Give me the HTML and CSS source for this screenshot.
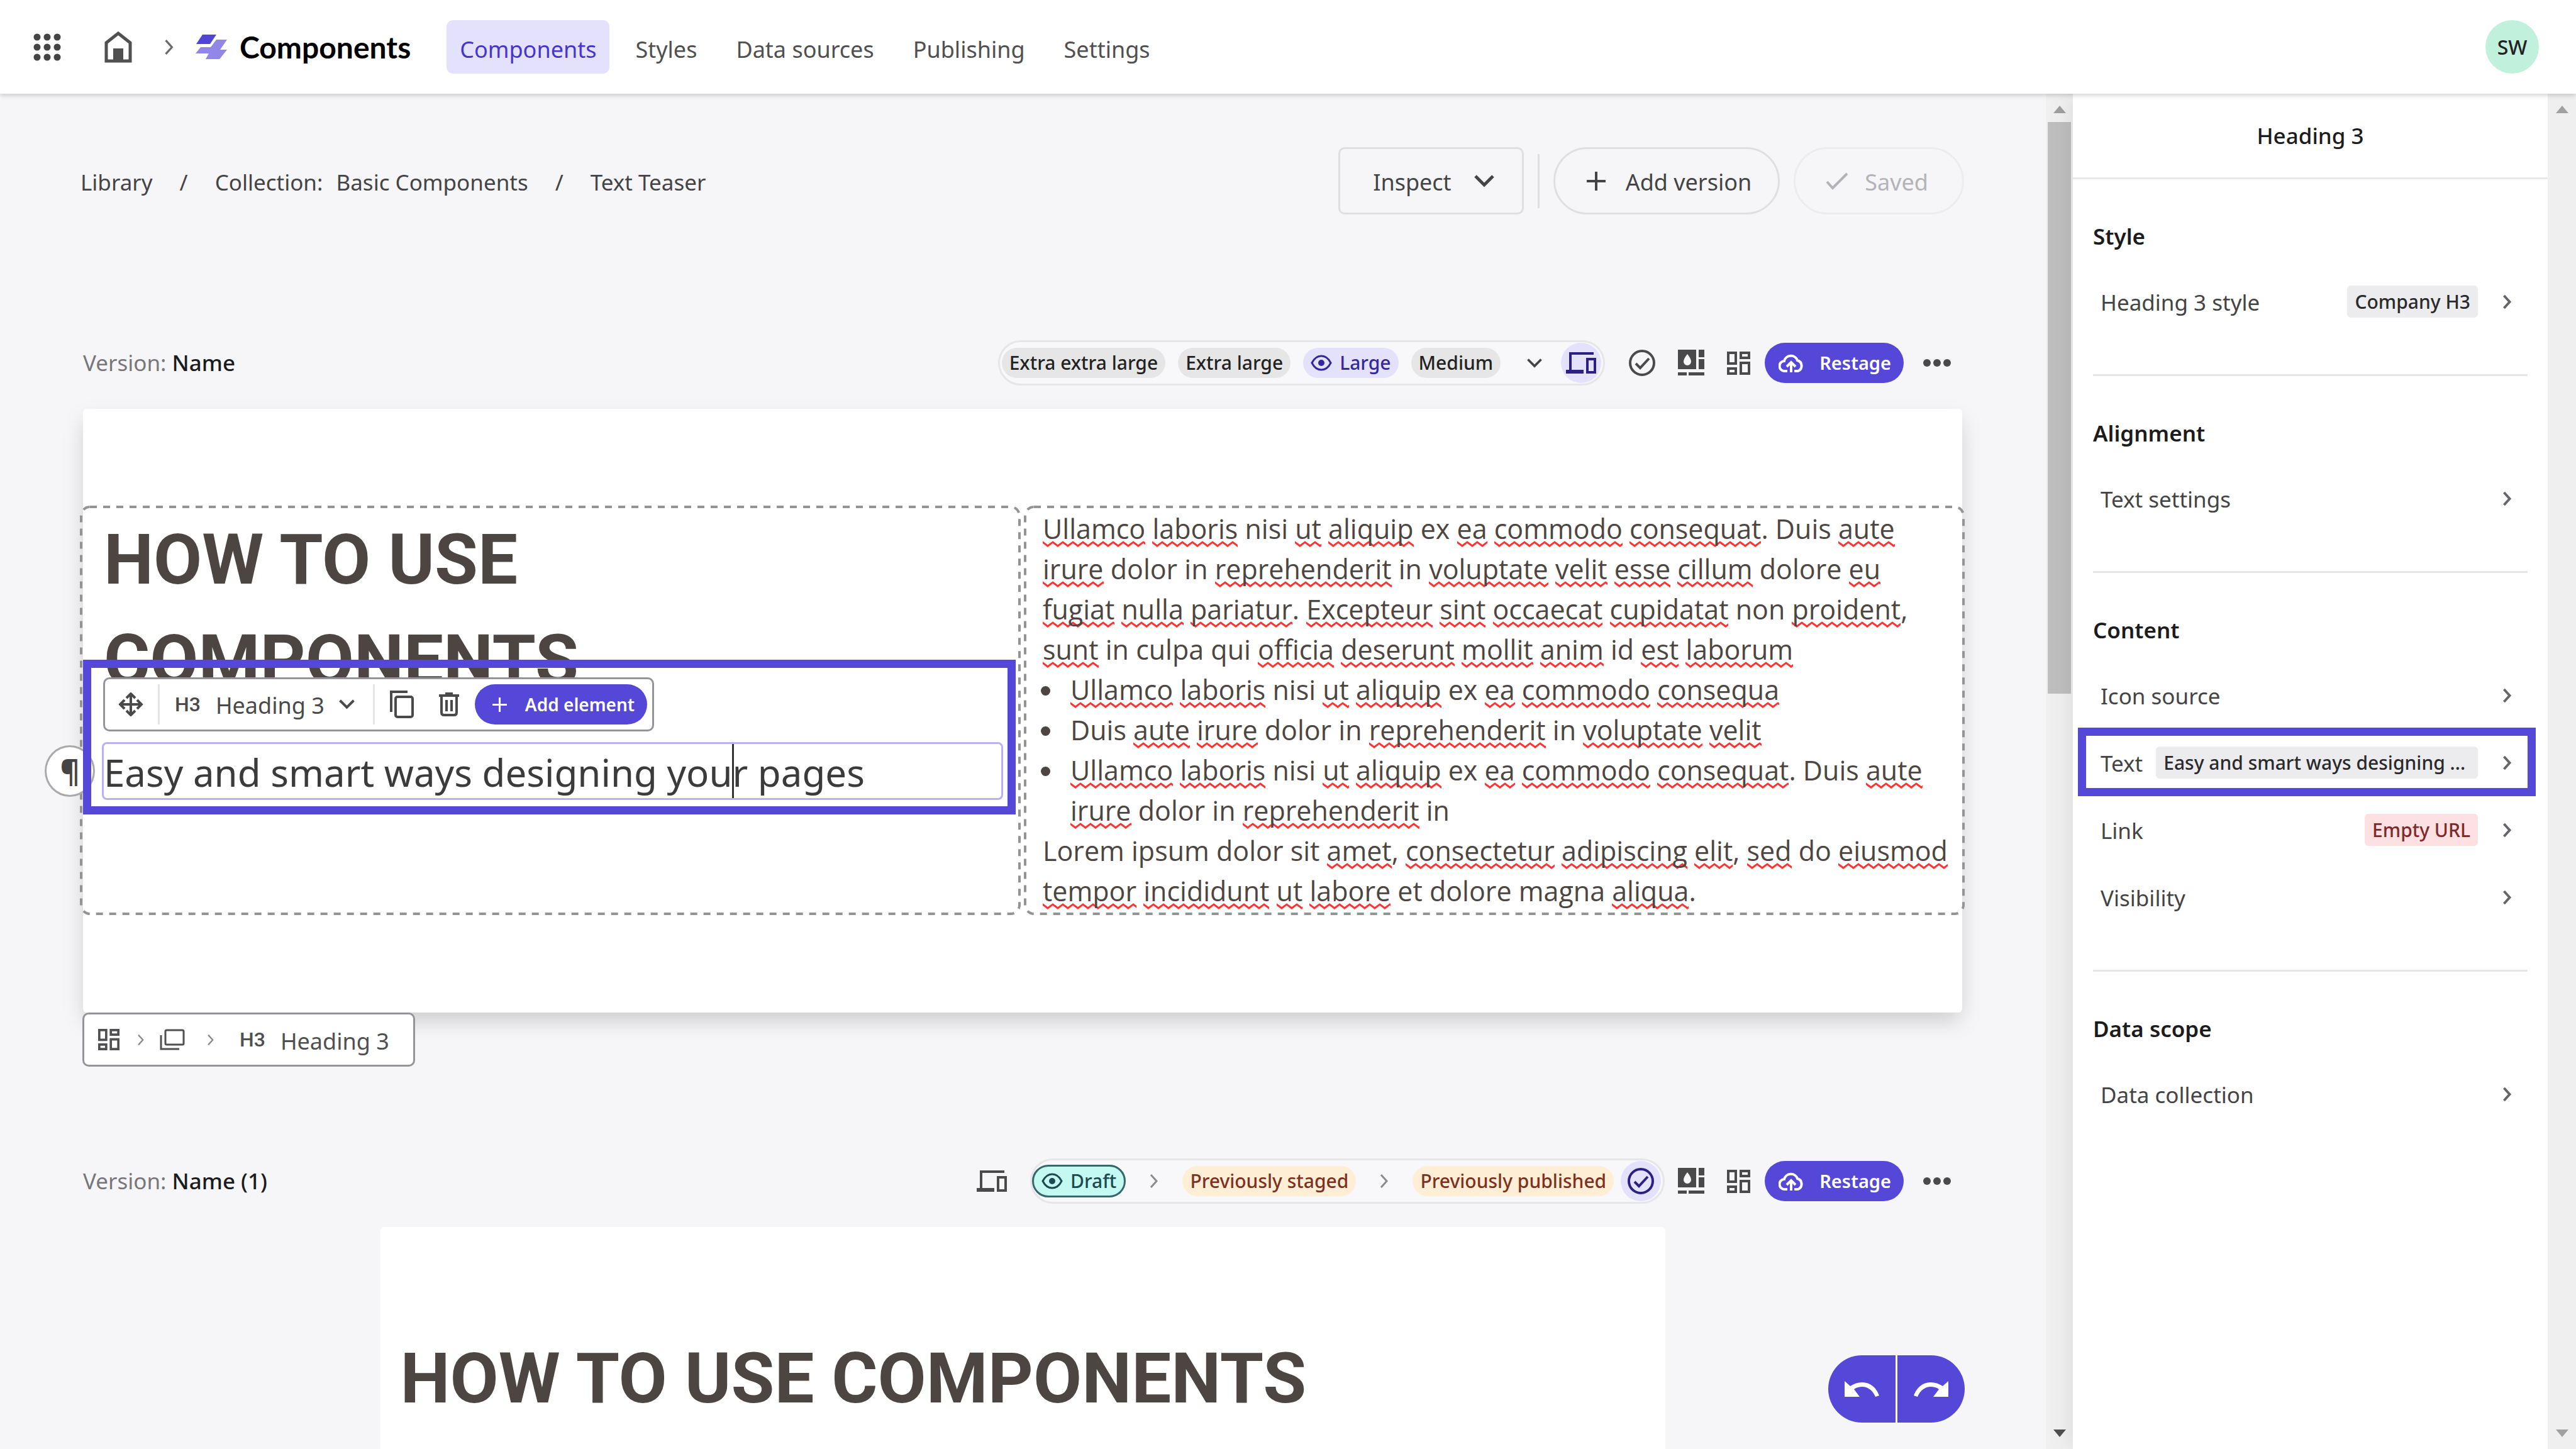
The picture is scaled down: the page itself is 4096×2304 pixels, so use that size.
FILE: index.html
```html
<!DOCTYPE html>
<html lang="en">
<head>
<meta charset="utf-8">
<title>Components – Text Teaser</title>
<link rel="stylesheet" href="styles.css">
</head>
<body>
<svg class="defs" aria-hidden="true">
  <symbol id="i-chev-r" viewBox="0 0 14 24"><path d="M2 2l9 10-9 10" fill="none" stroke="currentColor"/></symbol>
  <symbol id="i-chev-d" viewBox="0 0 32 20"><path d="M2 2l14 14L30 2" fill="none" stroke="currentColor" stroke-width="5"/></symbol>
  <symbol id="i-plus" viewBox="0 0 30 30"><path d="M15 0v30M0 15h30" stroke="currentColor" stroke-width="4"/></symbol>
  <symbol id="i-check" viewBox="0 0 36 28"><path d="M2 15l9 10L34 2" fill="none" stroke="currentColor" stroke-width="4"/></symbol>
  <symbol id="i-eye" viewBox="0 0 34 26"><path d="M2 13C6 5 11 2 17 2s11 3 15 11c-4 8-9 11-15 11S6 21 2 13z" fill="none" stroke="currentColor" stroke-width="3"/><circle cx="17" cy="13" r="5" fill="currentColor"/></symbol>
  <symbol id="i-device" viewBox="0 0 48 34"><path d="M44 2H7v27" fill="none" stroke="currentColor" stroke-width="4"/><path d="M0 28h28v6H0z" fill="currentColor"/><path d="M34 11h12v21H34z" fill="none" stroke="currentColor" stroke-width="4"/></symbol>
  <symbol id="i-circle" viewBox="0 0 42 42"><circle cx="21" cy="21" r="19" fill="none" stroke="currentColor" stroke-width="4"/><path d="M11 22l7 7 14-15" fill="none" stroke="currentColor" stroke-width="4"/></symbol>
  <symbol id="i-style" viewBox="0 0 42 42"><path fill="currentColor" fill-rule="evenodd" d="M0 0h29v31H0zM15 7c-4 5-6 9-6 12a6 6 0 0 0 12 0c0-3-2-7-6-12zM33 0h9v12h-9zM33 15h9v16h-9zM0 36h14v5H0zM17 36h25v5H17z"/></symbol>
  <symbol id="i-grid" viewBox="0 0 37 37"><path d="M2 2h12v17H2zM22 2h13v8H22zM22 18h13v17H22zM2 27h12v8H2z" fill="none" stroke="currentColor" stroke-width="4"/></symbol>
  <symbol id="i-cloud" viewBox="0 0 40 30"><path d="M14 28H10A8 8 0 0 1 9 12a11 11 0 0 1 21-1 9 9 0 0 1 1 17H25" fill="none" stroke="currentColor" stroke-width="4"/><path d="M20 30V15M13 21l7-7 7 7" fill="none" stroke="currentColor" stroke-width="4"/></symbol>
  <symbol id="i-dots" viewBox="0 0 44 12"><g fill="currentColor"><circle cx="6" cy="6" r="6"/><circle cx="22" cy="6" r="6"/><circle cx="38" cy="6" r="6"/></g></symbol>
  <symbol id="i-undo" viewBox="0 0 55 25"><path fill="currentColor" d="M0 0l9 8C15 4 21 2 28 2c13 0 23 9 27 21l-6 2C45 15 37 9 28 9c-5 0-9 1-13 4l9 12H0z"/></symbol>
  <symbol id="i-up" viewBox="0 0 20 12"><path fill="currentColor" d="M10 0l10 12H0z"/></symbol>
  <symbol id="i-down" viewBox="0 0 20 12"><path fill="currentColor" d="M0 0h20L10 12z"/></symbol>
</svg>

<header class="topbar">
  <button class="bare" aria-label="Apps"><svg width="44" height="44" viewBox="0 0 44 44"><g fill="#444"><circle cx="6" cy="6" r="5.500"/><circle cx="22" cy="6" r="5.500"/><circle cx="38" cy="6" r="5.500"/><circle cx="6" cy="22" r="5.500"/><circle cx="22" cy="22" r="5.500"/><circle cx="38" cy="22" r="5.500"/><circle cx="6" cy="38" r="5.500"/><circle cx="22" cy="38" r="5.500"/><circle cx="38" cy="38" r="5.500"/></g></svg></button>
  <a class="home" href="#" aria-label="Home"><svg width="44" height="50" viewBox="0 0 44 50"><path d="M3 18L22 3l19 15v29H3z" fill="none" stroke="#505050" stroke-width="5"/><path d="M14 27h16v20H14z" fill="#505050"/></svg></a>
  <svg class="sep" width="16" height="26"><use href="#i-chev-r"/></svg>
  <a class="brand" href="#"><svg width="50" height="39" viewBox="0 0 50 39"><path fill="#9287e6" d="M33 8h17L39 24h11L38 39H16l5-9H0l8-10h16z"/><path fill="#5244d6" d="M11 0h22L23 15H1z"/></svg><span>Components</span></a>
  <nav class="nav">
    <a class="active" href="#">Components</a>
    <a href="#">Styles</a>
    <a href="#">Data sources</a>
    <a href="#">Publishing</a>
    <a href="#">Settings</a>
  </nav>
  <button class="avatar">SW</button>
</header>

<div class="body">
  <main class="work">
    <div class="crumbrow">
      <nav class="crumbs"><a href="#">Library</a><span>/</span><a href="#">Collection: <b>Basic Components</b></a><span>/</span><a href="#">Text Teaser</a></nav>
      <div class="actions">
        <button class="btn square"><span>Inspect</span><svg width="32" height="20"><use href="#i-chev-d"/></svg></button>
        <i class="vline"></i>
        <button class="btn"><svg width="30" height="30"><use href="#i-plus"/></svg><span>Add version</span></button>
        <button class="btn saved" disabled><svg width="36" height="28"><use href="#i-check"/></svg><span>Saved</span></button>
      </div>
    </div>

    <section class="version first">
      <div class="bar">
        <h2>Version: <b>Name</b></h2>
        <div class="tools">
          <div class="group">
            <button class="chip">Extra extra large</button>
            <button class="chip">Extra large</button>
            <button class="chip on"><svg width="34" height="26"><use href="#i-eye"/></svg>Large</button>
            <button class="chip">Medium</button>
            <button class="more" aria-label="More sizes"><svg width="24" height="15"><use href="#i-chev-d"/></svg></button>
            <button class="bubble" aria-label="Devices"><svg width="48" height="34"><use href="#i-device"/></svg></button>
          </div>
          <button class="bare gap38" aria-label="Status"><svg width="42" height="42"><use href="#i-circle"/></svg></button>
          <button class="bare gap36" aria-label="Style"><svg width="42" height="42"><use href="#i-style"/></svg></button>
          <button class="bare gap36" aria-label="Layout"><svg width="37" height="37"><use href="#i-grid"/></svg></button>
          <button class="restage"><svg width="40" height="30"><use href="#i-cloud"/></svg>Restage</button>
          <button class="bare dots" aria-label="More"><svg width="44" height="12"><use href="#i-dots"/></svg></button>
        </div>
      </div>
      <div class="card">
        <div class="cols">
          <div class="col">
            <svg class="dash"><rect x="2" y="2" rx="14"/></svg>
            <h1>HOW TO USE COMPONENTS</h1>
            <button class="para" aria-label="Paragraph">¶</button>
            <div class="edit" contenteditable="true" spellcheck="false">Easy and smart ways designing you<span class="caret"></span>r pages</div>
            <div class="focus"></div>
            <div class="float">
              <button class="bare" aria-label="Move"><svg width="38" height="38" viewBox="0 0 38 38"><path d="M19 3v32M3 19h32" stroke="currentColor" stroke-width="4"/><path d="M12 9l7-7 7 7M12 29l7 7 7-7M9 12l-7 7 7 7M29 12l7 7-7 7" fill="none" stroke="currentColor" stroke-width="4"/></svg></button>
              <i></i>
              <button class="bare type"><em>H3</em><span>Heading 3</span><svg width="25" height="16"><use href="#i-chev-d"/></svg></button>
              <i></i>
              <button class="bare" aria-label="Copy"><svg width="38" height="44" viewBox="0 0 38 44"><path d="M28 2H2v32" fill="none" stroke="currentColor" stroke-width="4"/><rect x="9" y="10" width="27" height="32" rx="3" fill="none" stroke="currentColor" stroke-width="4"/></svg></button>
              <button class="bare trash" aria-label="Delete"><svg width="32" height="38" viewBox="0 0 32 38"><path d="M0 5h32M10 2h12" stroke="currentColor" stroke-width="4"/><path d="M4 6v26q0 4 4 4h16q4 0 4-4V6M12 12v18M20 12v18" fill="none" stroke="currentColor" stroke-width="4"/></svg></button>
              <button class="add"><svg width="23" height="23"><use href="#i-plus"/></svg>Add element</button>
            </div>
          </div>
          <div class="col copy">
            <svg class="dash"><rect x="2" y="2" rx="14"/></svg>
            <p><u>Ullamco</u> <u>laboris</u> nisi <u>ut</u> <u>aliquip</u> ex <u>ea</u> <u>commodo</u> <u>consequat</u>. Duis <u>aute</u> <u>irure</u> dolor in <u>reprehenderit</u> in <u>voluptate</u> <u>velit</u> <u>esse</u> <u>cillum</u> dolore <u>eu</u> <u>fugiat</u> <u>nulla</u> <u>pariatur</u>. <u>Excepteur</u> <u>sint</u> <u>occaecat</u> <u>cupidatat</u> non <u>proident</u>, <u>sunt</u> in culpa qui <u>officia</u> <u>deserunt</u> <u>mollit</u> <u>anim</u> id <u>est</u> <u>laborum</u></p>
            <ul>
              <li><u>Ullamco</u> <u>laboris</u> nisi <u>ut</u> <u>aliquip</u> ex <u>ea</u> <u>commodo</u> <u>consequa</u></li>
              <li>Duis <u>aute</u> <u>irure</u> dolor in <u>reprehenderit</u> in <u>voluptate</u> <u>velit</u></li>
              <li><u>Ullamco</u> <u>laboris</u> nisi <u>ut</u> <u>aliquip</u> ex <u>ea</u> <u>commodo</u> <u>consequat</u>. Duis <u>aute</u> <u>irure</u> dolor in <u>reprehenderit</u> in</li>
            </ul>
            <p>Lorem ipsum dolor sit <u>amet</u>, <u>consectetur</u> <u>adipiscing</u> <u>elit</u>, <u>sed</u> do <u>eiusmod</u> <u>tempor</u> <u>incididunt</u> <u>ut</u> <u>labore</u> et dolore magna <u>aliqua</u>.</p>
          </div>
        </div>
        <nav class="path" aria-label="Element path">
          <svg width="34" height="34"><use href="#i-grid"/></svg>
          <svg class="sep" width="12" height="19"><use href="#i-chev-r"/></svg>
          <svg width="40" height="34" viewBox="0 0 40 34"><rect x="9" y="2" width="29" height="23" rx="2" fill="none" stroke="currentColor" stroke-width="3"/><path d="M2 10v22h29" fill="none" stroke="currentColor" stroke-width="3"/></svg>
          <svg class="sep wide" width="12" height="19"><use href="#i-chev-r"/></svg>
          <em>H3</em><span>Heading 3</span>
        </nav>
      </div>
    </section>

    <section class="version">
      <div class="bar">
        <h2>Version: <b>Name (1)</b></h2>
        <div class="tools">
          <button class="bare" aria-label="Devices"><svg width="48" height="34"><use href="#i-device"/></svg></button>
          <div class="group states">
            <button class="chip draft"><svg width="34" height="26"><use href="#i-eye"/></svg>Draft</button>
            <svg class="sep" width="14" height="24"><use href="#i-chev-r"/></svg>
            <button class="chip warn">Previously staged</button>
            <svg class="sep" width="14" height="24"><use href="#i-chev-r"/></svg>
            <button class="chip warn">Previously published</button>
            <button class="bubble" aria-label="Status"><svg width="42" height="42"><use href="#i-circle"/></svg></button>
          </div>
          <button class="bare gap20" aria-label="Style"><svg width="42" height="42"><use href="#i-style"/></svg></button>
          <button class="bare gap36" aria-label="Layout"><svg width="37" height="37"><use href="#i-grid"/></svg></button>
          <button class="restage"><svg width="40" height="30"><use href="#i-cloud"/></svg>Restage</button>
          <button class="bare dots" aria-label="More"><svg width="44" height="12"><use href="#i-dots"/></svg></button>
        </div>
      </div>
      <div class="card narrow"><h1>HOW TO USE COMPONENTS</h1></div>
    </section>

    <div class="history">
      <button aria-label="Undo"><svg width="55" height="25"><use href="#i-undo"/></svg></button>
      <button class="redo" aria-label="Redo"><svg width="55" height="25"><use href="#i-undo"/></svg></button>
    </div>
  </main>

  <div class="scroll">
    <svg width="20" height="12"><use href="#i-up"/></svg>
    <div class="rail"><div class="thumb"></div></div>
    <svg class="dark" width="20" height="12"><use href="#i-down"/></svg>
  </div>

  <aside class="panel">
    <h2>Heading 3</h2>
    <section>
      <h3>Style</h3>
      <a class="row" href="#"><span>Heading 3 style</span><b class="tag">Company H3</b><svg width="15" height="24"><use href="#i-chev-r"/></svg></a>
    </section>
    <section>
      <h3>Alignment</h3>
      <a class="row" href="#"><span>Text settings</span><svg width="15" height="24"><use href="#i-chev-r"/></svg></a>
    </section>
    <section>
      <h3>Content</h3>
      <a class="row" href="#"><span>Icon source</span><svg width="15" height="24"><use href="#i-chev-r"/></svg></a>
      <a class="row marked" href="#"><span>Text</span><b class="tag fill">Easy and smart ways designing ...</b><svg width="15" height="24"><use href="#i-chev-r"/></svg></a>
      <a class="row" href="#"><span>Link</span><b class="tag error">Empty URL</b><svg width="15" height="24"><use href="#i-chev-r"/></svg></a>
      <a class="row" href="#"><span>Visibility</span><svg width="15" height="24"><use href="#i-chev-r"/></svg></a>
    </section>
    <section>
      <h3>Data scope</h3>
      <a class="row" href="#"><span>Data collection</span><svg width="15" height="24"><use href="#i-chev-r"/></svg></a>
    </section>
  </aside>

  <div class="scroll outer">
    <svg width="20" height="12"><use href="#i-up"/></svg>
    <div class="rail"></div>
    <svg width="20" height="12"><use href="#i-down"/></svg>
  </div>
</div>
</body>
</html>
```
FILE: styles.css
```css
:root {
  --accent: #5547d7;
  --lilac: #e4e1fd;
  --ink: #444446;
  --page: #f6f6f9;
}
*, *::before, *::after { box-sizing: border-box; }
body {
  margin: 0;
  height: 100vh;
  display: flex;
  flex-direction: column;
  overflow: hidden;
  background: var(--page);
  color: var(--ink);
  font: 36px/48px "Noto Sans", "Open Sans", sans-serif;
}
a { color: inherit; text-decoration: none; }
button {
  font: inherit;
  color: inherit;
  margin: 0;
  padding: 0;
  border: 0;
  background: none;
  display: flex;
  align-items: center;
  flex: none;
  white-space: nowrap;
}
svg { display: block; flex: none; }
h1, h2, h3, p, ul { margin: 0; padding: 0; }
em { font: 500 32px/48px Roboto, sans-serif; }
.defs { position: absolute; width: 0; height: 0; }
.sep { color: #8b8b8f; stroke-width: 3px; }

/* top bar */
.topbar {
  position: relative;
  z-index: 3;
  display: flex;
  align-items: center;
  flex: none;
  height: 149px;
  padding: 0 59px 0 53px;
  background: #fff;
  box-shadow: 0 2px 8px rgba(0, 0, 0, .2);
}
.home { margin: 0 51px 0 69px; }
.topbar .sep { color: #6b6b6b; }
.brand { display: flex; align-items: center; gap: 20px; margin-left: 34px; color: #000; font: 700 48px/60px Lato, sans-serif; }
.nav { display: flex; gap: 20px; margin-left: 57px; color: #505052; }
.nav a { padding: 23px 21px 14px; border-radius: 10px; }
.nav .active { background: var(--lilac); color: #4636cc; }
.avatar {
  justify-content: center;
  width: 85px;
  height: 85px;
  margin-left: auto;
  border-radius: 50%;
  background: #c1f0dc;
  color: #222;
  font-size: 32px;
  font-weight: 500;
}

/* frame */
.body { display: flex; flex: 1; min-height: 0; }
.work { position: relative; flex: 1; min-width: 0; overflow: hidden; padding: 85px 133px 0 132px; }
.crumbrow { display: flex; align-items: center; justify-content: space-between; margin: 0 -3px 0 -4px; }
.crumbs { display: flex; gap: 43px; padding-top: 4px; font-size: 35px; }
.crumbs b { font-weight: 400; margin-left: 12px; }
.actions { display: flex; align-items: center; gap: 22px; }
.btn { height: 107px; padding: 0 42px 0 50px; gap: 32px; border: 3px solid #dfdfe2; border-radius: 54px; }
.btn span { padding-top: 5px; }
.square { padding: 0 44px 0 52px; gap: 36px; border-radius: 10px; }
.saved { color: #b4b4b8; border-color: #ececef; padding: 0 54px 0 48px; gap: 26px; }
.vline { width: 3px; height: 86px; background: #dfdfe2; }

/* version header */
.version { margin-top: 232px; }
.first { margin-top: 200px; }
.bar { display: flex; align-items: center; justify-content: space-between; height: 72px; margin-bottom: 37px; }
.bar h2 { font-size: 35px; font-weight: 400; color: #77777b; }
.bar h2 b { font-weight: 500; color: #1c1c1e; }
.tools { display: flex; align-items: center; padding-right: 18px; }
.group { display: flex; align-items: center; height: 72px; padding: 0 3px; border: 3px solid #e6e6e9; border-radius: 36px; background: #f8f8fa; }
.group .chip + .chip { margin-left: 20px; }
.chip { height: 48px; gap: 12px; padding: 0 12px; border-radius: 24px; background: #e6e6e7; color: #222; font-size: 30px; font-weight: 500; }
.chip.on { background: var(--lilac); color: #35289c; }
.more { margin: 0 30px 0 42px; }
.bubble { justify-content: center; width: 64px; height: 64px; border-radius: 50%; background: var(--lilac); color: #2c2084; }
.bare { color: #4a4a4a; }
.gap20 { margin-left: 21px; }
.gap36 { margin-left: 36px; }
.gap38 { margin-left: 38px; }
.restage { height: 64px; margin-left: 23px; padding: 0 20px 0 22px; gap: 25px; border-radius: 32px; background: var(--accent); color: #fff; font-size: 29px; font-weight: 600; }
.dots { margin-left: 31px; }
.states { margin-left: 37px; padding: 0 3px 0 0; }
.states .sep { margin: 0 38px; }
.draft { height: 52px; border: 3px solid #34696b; border-radius: 26px; background: #c4f9f1; color: #1d4a4e; }
.warn { background: #feeed6; color: #7c321f; }
.states .bubble { margin-left: 11px; }

/* preview cards */
.card { position: relative; padding: 154px 0 155px; background: #fff; border-radius: 6px; box-shadow: 0 16px 36px -4px rgba(0, 0, 0, .18); color: #4d4541; }
h1 { font: 700 112px/160px Roboto, sans-serif; }
.narrow { width: 2043px; max-width: 100%; margin: 0 auto; padding: 161px 32px 160px; box-shadow: none; }
.cols { display: grid; grid-template-columns: 1fr 1fr; gap: 5px; margin: 0 -4px 0 -5px; }
.col { position: relative; padding: 6px 28px 4px 35px; }
.col h1 { width: 900px; padding-left: 3px; }
.dash { position: absolute; inset: 0; width: 100%; height: 100%; pointer-events: none; }
.dash rect { width: calc(100% - 4px); height: calc(100% - 4px); fill: none; stroke: #949494; stroke-width: 4px; stroke-dasharray: 11 10; }
.edit { position: relative; height: 92px; margin-top: 50px; border: 3px solid #b9b1f6; border-radius: 8px; color: #3b3b3b; font-size: 60px; line-height: 90px; white-space: nowrap; }
.caret { position: absolute; top: 0; width: 3px; height: 86px; background: #333; }
.focus { position: absolute; left: 5px; right: 8px; top: 245px; height: 246px; border: 13px solid var(--accent); pointer-events: none; }
.float { position: absolute; left: 37px; top: 273px; display: flex; align-items: center; height: 86px; padding: 0 8px 0 22px; border: 3px solid #94949a; border-radius: 10px; background: #fff; }
.float i { width: 3px; height: 64px; background: #e4e4e6; margin: 0 24px; }
.type { margin-right: 5px; }
.type span { margin: 0 23px 0 24px; padding-top: 4px; }
.trash { margin: 0 25px 0 40px; }
.add { height: 64px; padding: 0 20px 0 28px; gap: 29px; border-radius: 32px; background: var(--accent); color: #fff; font-size: 28px; font-weight: 600; }
.para { position: absolute; left: -56px; top: 381px; justify-content: center; width: 80px; height: 82px; border: 3px solid #a9a9ae; border-radius: 50%; background: #fff; color: #444; font: 700 48px/48px "Noto Sans", sans-serif; }
.copy { padding: 5px 16px 6px 30px; font: 43px/64px "Open Sans", sans-serif; }
.copy ul { list-style: none; padding-left: 44px; }
.copy li { position: relative; }
.copy li::before { content: ""; position: absolute; left: -47px; top: 26px; width: 15px; height: 15px; border-radius: 50%; background: #4d4541; }
.copy u {
  text-decoration: none;
  background: url("data:image/svg+xml,%3Csvg xmlns='http://www.w3.org/2000/svg' width='16' height='10'%3E%3Cpath d='M-8 8L0 2l8 6 8-6 8 6' fill='none' stroke='%23f33' stroke-width='3'/%3E%3C/svg%3E") repeat-x 0 100% / 16px 10px;
}
.path { position: absolute; left: -1px; top: 100%; display: flex; align-items: center; height: 86px; padding: 0 38px 0 22px; border: 3px solid #94949a; border-radius: 10px; background: #fff; color: #505052; }
.path .sep { margin: 0 24px 0 28px; }
.path .wide { margin: 0 40px 0 35px; }
.path span { margin-left: 24px; padding-top: 5px; }

.history { position: absolute; right: 129px; bottom: 42px; display: flex; gap: 3px; }
.history button { justify-content: center; width: 107px; height: 107px; border-radius: 54px 0 0 54px; background: var(--accent); color: #fff; }
.history .redo { border-radius: 0 54px 54px 0; }
.redo svg { transform: scaleX(-1); }

/* scroll bars */
.scroll { display: flex; flex-direction: column; align-items: center; flex: none; width: 43px; padding: 19px 0; background: #f0f0f0; color: #a0a0a0; }
.scroll .dark { color: #505050; }
.rail { flex: 1; width: 37px; padding: 14px 0; }
.thumb { height: 44%; background: #bfbfbf; }
.outer { width: 45px; background: #efefef; }

/* settings panel */
.panel { position: relative; z-index: 2; flex: none; width: 755px; background: #fff; box-shadow: 0 0 40px rgba(0, 0, 0, .1); clip-path: inset(0 0 0 -60px); }
.panel h2 { height: 136px; padding-top: 43px; border-bottom: 3px solid #e8e8ea; text-align: center; font-size: 35px; font-weight: 500; color: #1c1c1e; }
.panel section { margin: 0 32px; padding: 67px 0 62px; border-bottom: 3px solid #e6e6e8; }
.panel section:last-child { border: 0; }
.panel h3 { margin-bottom: 26px; font-size: 35px; font-weight: 600; color: #1c1c1e; }
.row { position: relative; display: flex; align-items: center; height: 107px; padding: 0 25px 0 12px; font-size: 35px; }
.row svg { margin-left: auto; color: #66666a; stroke-width: 4px; }
.row span { padding-top: 2px; }
.tag { height: 51px; margin-left: auto; padding: 0 12px; border-radius: 6px; background: #ececee; color: #2a2a2c; font-size: 30px; line-height: 51px; font-weight: 500; white-space: nowrap; }
.row .tag + svg { margin-left: 39px; }
.tag.fill { flex: 1; margin-left: 21px; }
.tag.error { background: #fde0e1; color: #7d2a2c; }
.marked::after { content: ""; position: absolute; left: -24px; right: -13px; top: -2px; height: 109px; border: 13px solid var(--accent); }
```
